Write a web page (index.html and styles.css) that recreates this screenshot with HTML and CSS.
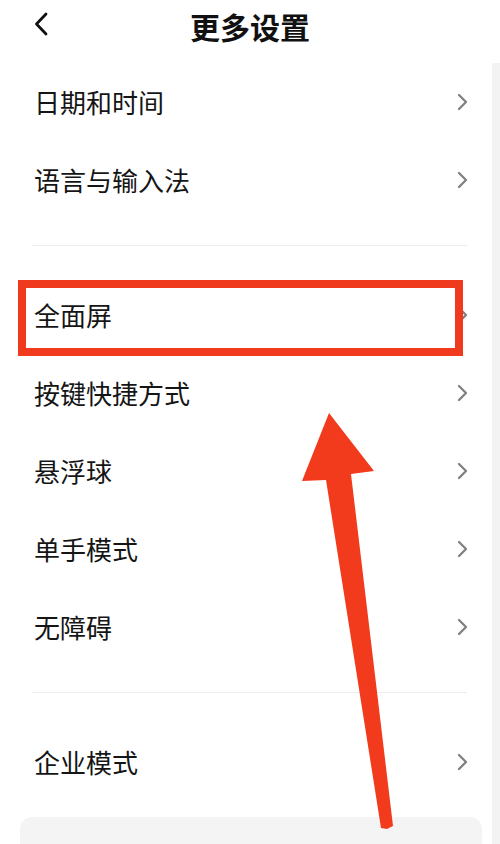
FILE: index.html
```html
<!DOCTYPE html>
<html lang="zh-CN">
<head>
<meta charset="utf-8">
<title>更多设置</title>
<link rel="stylesheet" href="styles.css">
</head>
<body>
<div class="screen">
  <div class="main">
    <header class="header">
      <svg class="back" width="14" height="24" viewBox="0 0 14 24"><path d="M12 2 L2.5 12 L12 22" fill="none" stroke="#111" stroke-width="2.8" stroke-linecap="round" stroke-linejoin="round"/></svg>
      <h1 class="title">更多设置</h1>
    </header>
    <div class="list">
      <div class="row"><span class="label">日期和时间</span><svg class="chev" width="11" height="18" viewBox="0 0 11 18"><path d="M2 2 L9 9 L2 16" fill="none" stroke="#808080" stroke-width="2.3" stroke-linecap="round" stroke-linejoin="round"/></svg></div>
      <div class="row"><span class="label">语言与输入法</span><svg class="chev" width="11" height="18" viewBox="0 0 11 18"><path d="M2 2 L9 9 L2 16" fill="none" stroke="#808080" stroke-width="2.3" stroke-linecap="round" stroke-linejoin="round"/></svg></div>
      <div class="divider"></div>
      <div class="row highlight"><span class="label">全面屏</span><svg class="chev" width="11" height="18" viewBox="0 0 11 18"><path d="M2 2 L9 9 L2 16" fill="none" stroke="#808080" stroke-width="2.3" stroke-linecap="round" stroke-linejoin="round"/></svg></div>
      <div class="row"><span class="label">按键快捷方式</span><svg class="chev" width="11" height="18" viewBox="0 0 11 18"><path d="M2 2 L9 9 L2 16" fill="none" stroke="#808080" stroke-width="2.3" stroke-linecap="round" stroke-linejoin="round"/></svg></div>
      <div class="row"><span class="label">悬浮球</span><svg class="chev" width="11" height="18" viewBox="0 0 11 18"><path d="M2 2 L9 9 L2 16" fill="none" stroke="#808080" stroke-width="2.3" stroke-linecap="round" stroke-linejoin="round"/></svg></div>
      <div class="row"><span class="label">单手模式</span><svg class="chev" width="11" height="18" viewBox="0 0 11 18"><path d="M2 2 L9 9 L2 16" fill="none" stroke="#808080" stroke-width="2.3" stroke-linecap="round" stroke-linejoin="round"/></svg></div>
      <div class="row"><span class="label">无障碍</span><svg class="chev" width="11" height="18" viewBox="0 0 11 18"><path d="M2 2 L9 9 L2 16" fill="none" stroke="#808080" stroke-width="2.3" stroke-linecap="round" stroke-linejoin="round"/></svg></div>
      <div class="divider"></div>
      <div class="row"><span class="label">企业模式</span><svg class="chev" width="11" height="18" viewBox="0 0 11 18"><path d="M2 2 L9 9 L2 16" fill="none" stroke="#808080" stroke-width="2.3" stroke-linecap="round" stroke-linejoin="round"/></svg></div>
      <div class="card"></div>
    </div>
  </div>
  <div class="rail"></div>
  <svg class="arrow" width="500" height="844" viewBox="0 0 500 844"><polygon points="329,413 374,471 351,474 393,826 387,829 381,828 326,480 302,481" fill="#f23a1c"/></svg>
</div>
</body>
</html>
```

FILE: styles.css
```css
* { box-sizing: border-box; }
html, body {
  margin: 0;
  padding: 0;
  background: #ffffff;
}
body {
  font-family: "Noto Sans CJK SC", "Noto Sans", sans-serif;
  color: #151515;
}
.screen {
  position: relative;
  width: 500px;
  height: 844px;
  overflow: hidden;
  display: flex;
  align-items: flex-start;
}
.main {
  flex: 1;
  display: flex;
  flex-direction: column;
}
.rail {
  width: 8px;
  height: 781px;
  margin-top: 63px;
  background: #f3f3f3;
}
.header {
  flex-shrink: 0;
  height: 52px;
  display: flex;
  align-items: center;
  justify-content: center;
  position: relative;
}
.back {
  position: absolute;
  left: 34px;
  top: 12px;
}
.title {
  margin: 0 0 0 8px;
  font-size: 30px;
  font-weight: 700;
  line-height: 44px;
  color: #111;
}
.list {
  flex-shrink: 0;
  padding-top: 11px;
  display: flex;
  flex-direction: column;
}
.row {
  flex-shrink: 0;
  height: 78px;
  display: flex;
  align-items: center;
  justify-content: space-between;
  padding-left: 34px;
  padding-right: 24px;
  position: relative;
}
.label {
  font-size: 26px;
  line-height: 36px;
  font-weight: 400;
  color: #151515;
}
.chev {
  display: block;
}
.divider {
  flex-shrink: 0;
  height: 1px;
  background: #ededed;
  margin: 26px 25px 30px 32px;
}
.highlight::after {
  content: "";
  position: absolute;
  top: 4px;
  bottom: -2px;
  left: 18px;
  right: 29px;
  border: 8px solid #ef3a1d;
}
.card {
  flex-shrink: 0;
  margin: 16px 10px 0 20px;
  height: 60px;
  background: #f4f4f4;
  border-radius: 12px 12px 0 0;
}
.arrow {
  position: absolute;
  left: 0;
  top: 0;
  pointer-events: none;
}
```
